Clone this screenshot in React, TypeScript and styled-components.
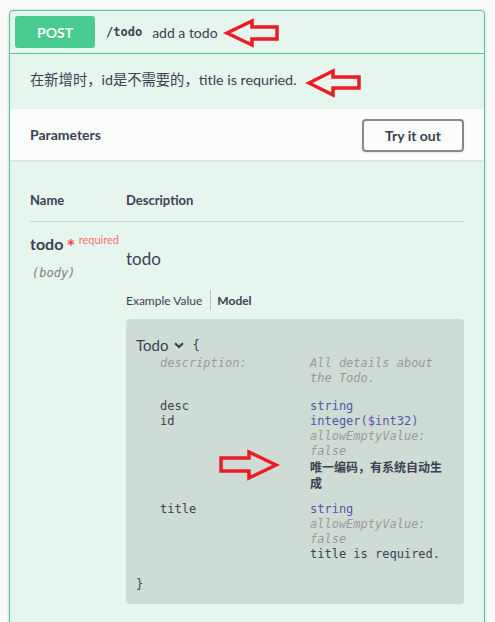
import React from "react";
import styled, { createGlobalStyle } from "styled-components";

const Global = createGlobalStyle`
  html, body { margin: 0; padding: 0; background: #fafafa; }
  body { font-family: Lato, "Noto Sans CJK SC", sans-serif; color: #3b4151; }
  * { box-sizing: border-box; }
`;

const Page = styled.div`
  position: relative;
  width: 495px;
  height: 622px;
  overflow: hidden;
  padding: 10px 0 0 9px;
`;

const Block = styled.div`
  width: 476px;
  border: 1px solid #49cc90;
  border-radius: 4px;
  background: rgba(73, 204, 144, 0.1);
  box-shadow: 0 0 3px rgba(0, 0, 0, 0.19);
  min-height: 640px;
`;

const Summary = styled.div`
  display: flex;
  align-items: center;
  padding: 5px;
  border-bottom: 1px solid #49cc90;
`;

const Method = styled.span`
  width: 80px;
  height: 32px;
  border-radius: 3px;
  background: #49cc90;
  color: #fff;
  font: 700 14px Lato, sans-serif;
  display: flex;
  align-items: center;
  justify-content: center;
  text-shadow: 0 1px 0 rgba(0, 0, 0, 0.1);
`;

const Path = styled.span`
  font: 700 12px "DejaVu Sans Mono", monospace;
  margin-left: 11px;
  color: #3b4151;
`;

const SummaryText = styled.span`
  font: 400 14px Lato, sans-serif;
  margin-left: 10px;
`;

const Description = styled.div`
  padding: 16px 20px 19px;
  font: 400 14.3px/20px Lato, "Noto Sans CJK SC", sans-serif;
`;

const SectionHeader = styled.div`
  display: flex;
  align-items: center;
  justify-content: space-between;
  height: 51px;
  padding: 0 20px;
  background: rgba(255, 255, 255, 0.8);
  box-shadow: 0 1px 2px rgba(0, 0, 0, 0.1);
`;

const SectionTitle = styled.h4`
  margin: 0;
  font: 700 14px Lato, sans-serif;
`;

const TryButton = styled.button`
  width: 102px;
  height: 33px;
  border: 2px solid #888;
  border-radius: 4px;
  background: transparent;
  font: 700 14px Lato, sans-serif;
  color: #3b4151;
  box-shadow: 0 1px 2px rgba(0, 0, 0, 0.1);
  margin-top: 1px;
`;

const TableWrap = styled.div`
  padding: 20px 20px 0;
`;

const HeadRow = styled.div`
  display: grid;
  grid-template-columns: 96px 1fr;
  padding: 12px 0 13px;
  border-bottom: 1px solid rgba(59, 65, 81, 0.2);
  font: 700 13px/16px Lato, sans-serif;
`;

const ParamRow = styled.div`
  display: grid;
  grid-template-columns: 96px 1fr;
  padding-top: 12px;
`;

const NameCell = styled.div`
  display: flex;
  flex-direction: column;
`;

const ParamName = styled.div`
  font: 700 16px/20px Lato, sans-serif;
  display: flex;
  align-items: flex-start;
`;

const Star = styled.span`
  color: #f93e3e;
  font: 700 14px/20px "DejaVu Sans", sans-serif;
  margin-left: 4px;
`;

const Required = styled.span`
  color: rgba(255, 0, 0, 0.6);
  font: 400 11px Lato, sans-serif;
  margin-left: 4px;
  line-height: 12px;
`;

const ParamIn = styled.div`
  margin-top: 11px;
  margin-left: 2px;
  font: italic 400 12px/16px "DejaVu Sans Mono", monospace;
  color: #808080;
`;

const DescCell = styled.div`
  display: flex;
  flex-direction: column;
`;

const Markdown = styled.p`
  margin: 14px 0 0;
  font: 400 17px/22px Lato, sans-serif;
  color: #3b4151;
`;

const Tabs = styled.div`
  display: flex;
  align-items: center;
  margin-top: 20px;
  height: 20px;
  font: 400 12px Lato, sans-serif;
`;

const Tab = styled.span<{ $active?: boolean }>`
  font-weight: ${(p) => (p.$active ? 700 : 400)};
  padding: ${(p) => (p.$active ? "0 0 0 6px" : "0 8px 0 0")};
  height: 20px;
  display: flex;
  align-items: center;
  border-right: ${(p) => (p.$active ? "none" : "1px solid rgba(0,0,0,0.2)")};
`;

const ModelBox = styled.div`
  margin-top: 9px;
  width: 338px;
  background: rgba(0, 0, 0, 0.1);
  border-radius: 4px;
  padding: 16px 10px 12px;
`;

const ModelTitle = styled.div`
  display: flex;
  align-items: center;
  height: 20px;
  margin-bottom: 1px;
  font: 400 15px Lato, sans-serif;
`;

const Brace = styled.span`
  font: 400 12px/15px "DejaVu Sans Mono", monospace;
`;

const Chevron = styled.svg`
  margin: 0 8px 0 6px;
`;

const Props = styled.div`
  padding-left: 24px;
`;

const PropRow = styled.div<{ $gap: number }>`
  display: grid;
  grid-template-columns: 150px 140px;
  margin-bottom: ${(p) => p.$gap}px;
  font: 400 12px/15px "DejaVu Sans Mono", monospace;
`;

const Key = styled.span<{ $muted?: boolean }>`
  color: ${(p) => (p.$muted ? "#999" : "#3b4151")};
  font-style: ${(p) => (p.$muted ? "italic" : "normal")};
`;

const Values = styled.div`
  display: flex;
  flex-direction: column;
`;

const Muted = styled.span`
  color: #999;
  font-style: italic;
`;

const TypeText = styled.span`
  color: #55a;
`;

const Plain = styled.span`
  color: #3b4151;
`;

const Cjk = styled.span`
  font: 700 12px/16px "Noto Sans CJK SC", sans-serif;
  color: #3b4151;
`;

const Closing = styled.div`
  margin-top: 15px;
  font: 400 12px/15px "DejaVu Sans Mono", monospace;
`;

const Arrows = styled.svg`
  position: absolute;
  left: 0;
  top: 0;
  pointer-events: none;
`;

export default function App() {
  return (
    <>
      <Global />
      <Page>
        <Block>
          <Summary>
            <Method>POST</Method>
            <Path>/todo</Path>
            <SummaryText>add a todo</SummaryText>
          </Summary>
          <Description>在新增时，id是不需要的，title is requried.</Description>
          <SectionHeader>
            <SectionTitle>Parameters</SectionTitle>
            <TryButton>Try it out</TryButton>
          </SectionHeader>
          <TableWrap>
            <HeadRow>
              <span>Name</span>
              <span>Description</span>
            </HeadRow>
            <ParamRow>
              <NameCell>
                <ParamName>
                  todo<Star>*</Star>
                  <Required>required</Required>
                </ParamName>
                <ParamIn>(body)</ParamIn>
              </NameCell>
              <DescCell>
                <Markdown>todo</Markdown>
                <Tabs>
                  <Tab>Example Value</Tab>
                  <Tab $active>Model</Tab>
                </Tabs>
                <ModelBox>
                  <ModelTitle>
                    Todo
                    <Chevron width="10" height="7" viewBox="0 0 10 7">
                      <path d="M1 1.2 L5 5 L9 1.2" fill="none" stroke="#3b4151" strokeWidth="2.2" />
                    </Chevron>
                    <Brace>{"{"}</Brace>
                  </ModelTitle>
                  <Props>
                    <PropRow $gap={13}>
                      <Key $muted>description:</Key>
                      <Values>
                        <Muted>All details about the Todo.</Muted>
                      </Values>
                    </PropRow>
                    <PropRow $gap={0}>
                      <Key>desc</Key>
                      <Values>
                        <TypeText>string</TypeText>
                      </Values>
                    </PropRow>
                    <PropRow $gap={11}>
                      <Key>id</Key>
                      <Values>
                        <TypeText>integer($int32)</TypeText>
                        <Muted>allowEmptyValue: false</Muted>
                        <Cjk>唯一编码，有系统自动生成</Cjk>
                      </Values>
                    </PropRow>
                    <PropRow $gap={0}>
                      <Key>title</Key>
                      <Values>
                        <TypeText>string</TypeText>
                        <Muted>allowEmptyValue: false</Muted>
                        <Plain>title is required.</Plain>
                      </Values>
                    </PropRow>
                  </Props>
                  <Closing>{"}"}</Closing>
                </ModelBox>
              </DescCell>
            </ParamRow>
          </TableWrap>
        </Block>
        <Arrows width="495" height="622" viewBox="0 0 495 622">
          <g fill="none" stroke="#ed1c24" strokeWidth="3.5" strokeLinejoin="miter">
            <polygon points="227,33 252,21 252,27 277,27 277,39 252,39 252,45" />
            <polygon points="309,83 333,71 333,77 359,77 359,88 333,88 333,95" />
            <polygon points="221,458 249,458 249,452 276,465 249,478 249,471 221,471" />
          </g>
        </Arrows>
      </Page>
    </>
  );
}
